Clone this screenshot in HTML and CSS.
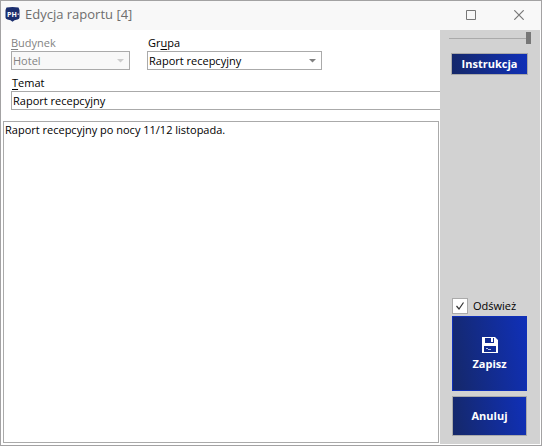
FILE: index.html
```html
<!DOCTYPE html>
<html lang="pl">
<head>
<meta charset="utf-8">
<title>Edycja raportu [4]</title>
<link rel="stylesheet" href="styles.css">
</head>
<body>
<div class="window">
  <header class="titlebar">
    <svg class="logo" width="15" height="15" viewBox="0 0 15 15" aria-hidden="true">
      <path d="M1.500 0.500Q7.500 -.4 13.500 .5L14.500 3V10.500Q14.500 12 12.500 12.500L9.500 13.300L7.500 14.800L5.500 13.300L2.500 12.500Q.5 12 .5 10.500V3Z" fill="#1b2e6e"/>
      <text class="logo-text" x="2" y="10">PH</text>
      <path d="M12.500 6.500h1.500v1.500h-1.500z" fill="#aab4d4"/>
    </svg>
    <h1 class="title">Edycja raportu [4]</h1>
    <button class="window-button" type="button" aria-label="Maksymalizuj">
      <svg width="10" height="10" viewBox="0 0 10 10"><path d="M.5 .5h9v9h-9z" fill="none" stroke="#777"/></svg>
    </button>
    <button class="window-button" type="button" aria-label="Zamknij">
      <svg width="10" height="10" viewBox="0 0 10 10"><path d="M.3 .3l9.400 9.400M9.700 .3L.3 9.700" fill="none" stroke="#777" stroke-width="1.200"/></svg>
    </button>
  </header>
  <form class="content">
    <div class="main">
      <div class="fields">
        <div class="field building">
          <label class="disabled" for="building"><u>B</u>udynek</label>
          <div class="select">
            <select id="building" disabled><option>Hotel</option></select>
            <svg class="arrow" width="7" height="4" viewBox="0 0 7 4"><path d="M0 0h7L3.500 3.500z" fill="#ccc"/></svg>
          </div>
        </div>
        <div class="field group">
          <label for="group">Gr<u>u</u>pa</label>
          <div class="select">
            <select id="group"><option>Raport recepcyjny</option></select>
            <svg class="arrow" width="7" height="4" viewBox="0 0 7 4"><path d="M0 0h7L3.500 3.500z" fill="#808080"/></svg>
          </div>
        </div>
        <div class="field subject">
          <label for="subject"><u>T</u>emat</label>
          <input id="subject" type="text" value="Raport recepcyjny">
        </div>
      </div>
      <textarea class="report" aria-label="Treść raportu" spellcheck="false">Raport recepcyjny po nocy 11/12 listopada.</textarea>
    </div>
    <aside class="sidebar">
      <input class="slider" type="range" min="0" max="100" value="100" aria-label="Przezroczystość">
      <button class="button help" type="button">Instrukcja</button>
      <label class="refresh">
        <input type="checkbox" checked>
        <svg class="tick" width="16" height="16" viewBox="0 0 16 16"><path d="M4.500 8l2.500 3L11.500 4.500" fill="none" stroke="#333" stroke-width="1.200"/></svg>
        <span>Odśwież</span>
      </label>
      <button class="button save" type="submit">
        <svg width="16" height="16" viewBox="0 0 16 16" aria-hidden="true">
          <path fill="#fff" fill-rule="evenodd" d="M0 0H13L16 3V16H0ZM3 1V6H12V1H11V5H9V1ZM2 9V15H14V9Z"/>
          <path d="M4 11.500h2M6 12.500h3" stroke="#b8c2e8" fill="none"/>
        </svg>
        <span>Zapisz</span>
      </button>
      <button class="button cancel" type="button">Anuluj</button>
    </aside>
  </form>
</div>
</body>
</html>
```
FILE: styles.css
```css
* {
  box-sizing: border-box;
}

body {
  margin: 0;
  font: 11px/16px "Open Sans", "Noto Sans", sans-serif;
  color: #000;
}

button,
input,
select,
textarea {
  margin: 0;
  font: inherit;
  color: inherit;
}

.window {
  display: flex;
  flex-direction: column;
  height: 100vh;
  border: 1px solid #a3a2a3;
  background: #fff;
}

.titlebar {
  display: flex;
  align-items: center;
  flex: none;
  height: 29px;
  padding-left: 4px;
  background: #f8f8f8;
}

.logo {
  margin-bottom: 2px;
}

.logo-text {
  font: bold 7px "Open Sans", sans-serif;
  fill: #fff;
}

.title {
  flex: 1;
  margin: 0 0 3px 5px;
  font-size: 13px;
  font-weight: 400;
  line-height: 18px;
  color: #6d6d6d;
}

.window-button {
  display: flex;
  align-items: center;
  justify-content: center;
  width: 48px;
  height: 29px;
  padding: 0 0 2px 4px;
  border: 0;
  background: none;
}

.content {
  display: flex;
  flex: 1;
  min-height: 0;
  padding: 0 1px 1px 0;
}

.main {
  display: flex;
  flex-direction: column;
  flex: 1;
  min-width: 0;
  padding: 5px 0 1px 2px;
}

.fields {
  display: grid;
  grid-template-columns: 119px 175px;
  justify-content: start;
  gap: 5px 17px;
  padding-left: 8px;
}

.field {
  display: flex;
  flex-direction: column;
}

.subject {
  grid-column: 1 / -1;
  width: calc(100vw - 112px);
}

label {
  padding-left: 1px;
}

.disabled {
  padding-left: 0;
  color: #838383;
}

.field u {
  text-underline-offset: 2px;
}

.select {
  display: grid;
  align-items: center;
}

.select select,
.subject input {
  width: 100%;
  height: 19px;
  padding: 0 1px;
  border: 1px solid #aaa;
  border-radius: 0;
  background: #fff;
  appearance: none;
  outline: 0;
}

.subject input {
  border-right: 0;
}

.select > * {
  grid-area: 1 / 1;
}

.select select:disabled {
  background: #f8f8f8;
  color: #838383;
  opacity: 1;
}

.arrow {
  justify-self: end;
  margin-right: 6px;
  pointer-events: none;
}

.report {
  flex: 1;
  margin: 11px 1px 0 0;
  padding: 0 1px;
  border: 1px solid #aaa;
  outline: 0;
  resize: none;
}

.sidebar {
  display: flex;
  flex-direction: column;
  width: 100px;
  padding: 2px 13px 8px 12px;
  background: #d2d2d2;
}

.slider {
  width: 82px;
  height: 12px;
  margin-left: -3px;
  background: linear-gradient(#aaa, #aaa) left center / 78px 1px no-repeat;
  appearance: none;
}

.slider::-webkit-slider-thumb {
  width: 5px;
  height: 12px;
  background: #777;
  appearance: none;
}

.button {
  display: flex;
  flex-direction: column;
  align-items: center;
  justify-content: center;
  gap: 3px;
  flex: none;
  padding: 0;
  border: 1px solid #aaa;
  background: linear-gradient(80deg, #152869, #1030b8);
  font-weight: 700;
  color: #fff;
}

.help {
  height: 22px;
  margin: 9px -1px 0;
}

.refresh {
  display: grid;
  grid-template-columns: 16px auto;
  align-items: center;
  column-gap: 5px;
  margin-top: auto;
  padding: 0;
}

.refresh input {
  grid-area: 1 / 1;
  width: 16px;
  height: 16px;
  border: 1px solid #aaa;
  background: #fff;
  appearance: none;
}

.tick {
  grid-area: 1 / 1;
  visibility: hidden;
  pointer-events: none;
}

.refresh input:checked + .tick {
  visibility: visible;
}

.save {
  height: 75px;
  margin: 2px 0 5px;
  padding-top: 2px;
  border-color: #1030b8;
}

.cancel {
  height: 40px;
}
```
